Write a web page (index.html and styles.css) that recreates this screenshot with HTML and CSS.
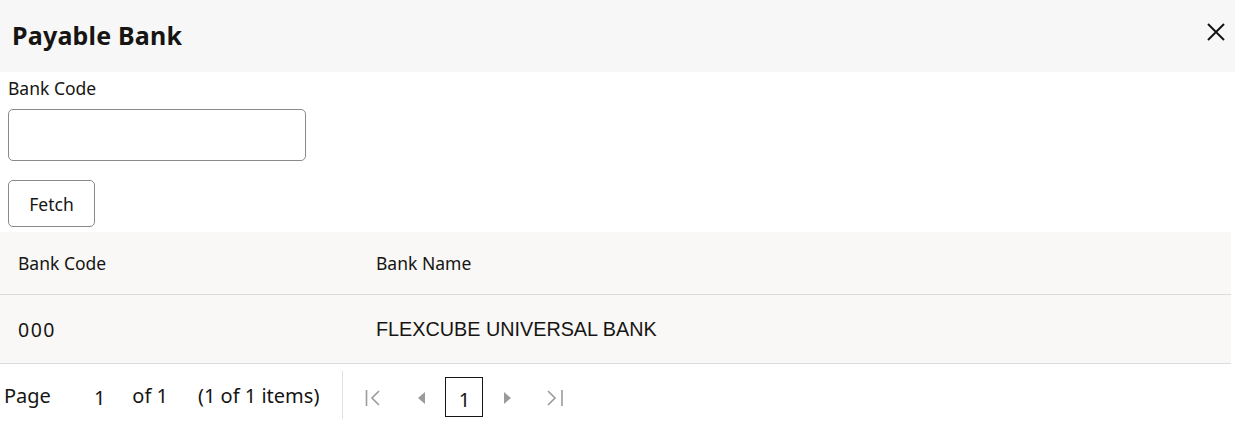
FILE: index.html
```html
<!DOCTYPE html>
<html lang="en">
<head>
  <meta charset="UTF-8" />
  <title>Payable Bank</title>
  <link rel="stylesheet" href="styles.css">
</head>
<body>
  <div class="dialog">
    <div class="dialog-header">
      <h1>Payable Bank</h1>
      <button class="close" aria-label="Close">
        <svg width="20" height="20" viewBox="0 0 20 20"><path d="M2 2 L18 18 M18 2 L2 18" stroke="#161513" stroke-width="2" fill="none"/></svg>
      </button>
    </div>
    <div class="dialog-body">
      <label class="field-label" for="bankCode">Bank Code</label>
      <input class="field-input" type="text" id="bankCode">
      <button class="btn">Fetch</button>

      <table class="grid">
        <thead>
          <tr>
            <th class="col-code">Bank Code</th>
            <th>Bank Name</th>
          </tr>
        </thead>
        <tbody>
          <tr>
            <td class="col-code code-val">000</td>
            <td class="bank-name">FLEXCUBE UNIVERSAL BANK</td>
          </tr>
        </tbody>
      </table>

      <div class="pager">
        <div class="pager-info">
          <span class="pager-page">Page</span>
          <span class="pager-num">1</span>
          <span class="pager-of">of 1</span>
          <span class="pager-items">(1 of 1 items)</span>
        </div>
        <div class="pager-nav">
          <svg class="nav-icon first" width="16" height="18" viewBox="0 0 16 18"><path d="M1.5 1 V17" stroke="#9b9b9b" stroke-width="1.6" fill="none"/><path d="M14 2 L7 9 L14 16" stroke="#9b9b9b" stroke-width="1.6" fill="none"/></svg>
          <svg class="nav-icon" width="7" height="12" viewBox="0 0 7 12"><path d="M7 0 L0 6 L7 12 Z" fill="#9b9b9b"/></svg>
          <span class="page-box">1</span>
          <svg class="nav-icon next" width="7" height="12" viewBox="0 0 7 12"><path d="M0 0 L7 6 L0 12 Z" fill="#9b9b9b"/></svg>
          <svg class="nav-icon" width="18" height="18" viewBox="0 0 18 18"><path d="M2 2 L9 9 L2 16" stroke="#9b9b9b" stroke-width="1.6" fill="none"/><path d="M16 1 V17" stroke="#9b9b9b" stroke-width="1.6" fill="none"/></svg>
        </div>
      </div>
    </div>
  </div>
</body>
</html>
```

FILE: styles.css
```css
body {
  margin: 0;
  font-family: "Noto Sans", "Open Sans", sans-serif;
  color: #161513;
  background-color: #fff;
}
.dialog {
  width: 1235px;
  height: 422px;
  overflow: hidden;
}
.dialog-header {
  height: 72px;
  background-color: #f7f7f7;
  display: flex;
  align-items: center;
  justify-content: space-between;
  padding: 0 9px 0 12px;
}
.dialog-header h1 {
  margin: 0 0 2px 0;
  font-size: 25px;
  font-weight: 700;
  letter-spacing: 0.2px;
}
.close {
  border: none;
  background: none;
  padding: 0;
  width: 20px;
  height: 20px;
  margin-top: -8px;
  cursor: pointer;
}
.dialog-body {
  padding: 0 4px 0 0;
}
.field-label {
  display: block;
  font-size: 17.5px;
  margin: 4px 0 0 8px;
  line-height: 24px;
}
.field-input {
  display: block;
  box-sizing: border-box;
  width: 298px;
  height: 52px;
  margin: 9px 0 0 8px;
  border: 1px solid #8a8a8a;
  border-radius: 5px;
}
.btn {
  display: block;
  box-sizing: border-box;
  width: 87px;
  height: 47px;
  margin: 19px 0 0 8px;
  border: 1px solid #8a8a8a;
  border-radius: 5px;
  background: #fff;
  font-family: inherit;
  font-size: 17.5px;
  color: #161513;
  padding: 0;
}
.grid {
  width: 100%;
  border-collapse: collapse;
  margin-top: 5px;
  background-color: #f9f8f6;
  font-size: 17.5px;
}
.grid th, .grid td {
  text-align: left;
  font-weight: 400;
  padding: 0 10px;
  border-bottom: 1px solid #dcdcdc;
}
.grid th {
  height: 62px;
}
.grid td {
  height: 68px;
}
.grid .col-code {
  width: 338px;
  padding-left: 18px;
}
.grid .code-val {
  font-size: 19.5px;
  letter-spacing: 1.5px;
}
.grid .bank-name {
  font-family: "Liberation Sans", Arial, sans-serif;
  font-size: 19.8px;
}
.pager {
  display: flex;
  align-items: center;
  height: 58px;
  font-size: 20px;
}
.pager-info {
  display: flex;
  align-items: center;
  padding-left: 4px;
  padding-right: 23px;
  height: 48px;
  margin-top: 4px;
  border-right: 1px solid #e0e0e0;
}
.pager-page { margin-right: 43px; }
.pager-num { margin-right: 27px; margin-top: 4px; }
.pager-of { margin-right: 30px; }
.pager-nav {
  display: flex;
  align-items: center;
  padding-left: 22px;
  margin-top: 4px;
}
.nav-icon { display: block; margin-top: 6px; }
.nav-icon.first { margin-right: 37px; }
.nav-icon.next { margin-right: 35px; }
.page-box {
  box-sizing: border-box;
  width: 38px;
  height: 40px;
  border: 1px solid #161513;
  display: flex;
  align-items: center;
  justify-content: center;
  margin: 4px 21px 0 20px;
  padding-top: 4px;
}
```
